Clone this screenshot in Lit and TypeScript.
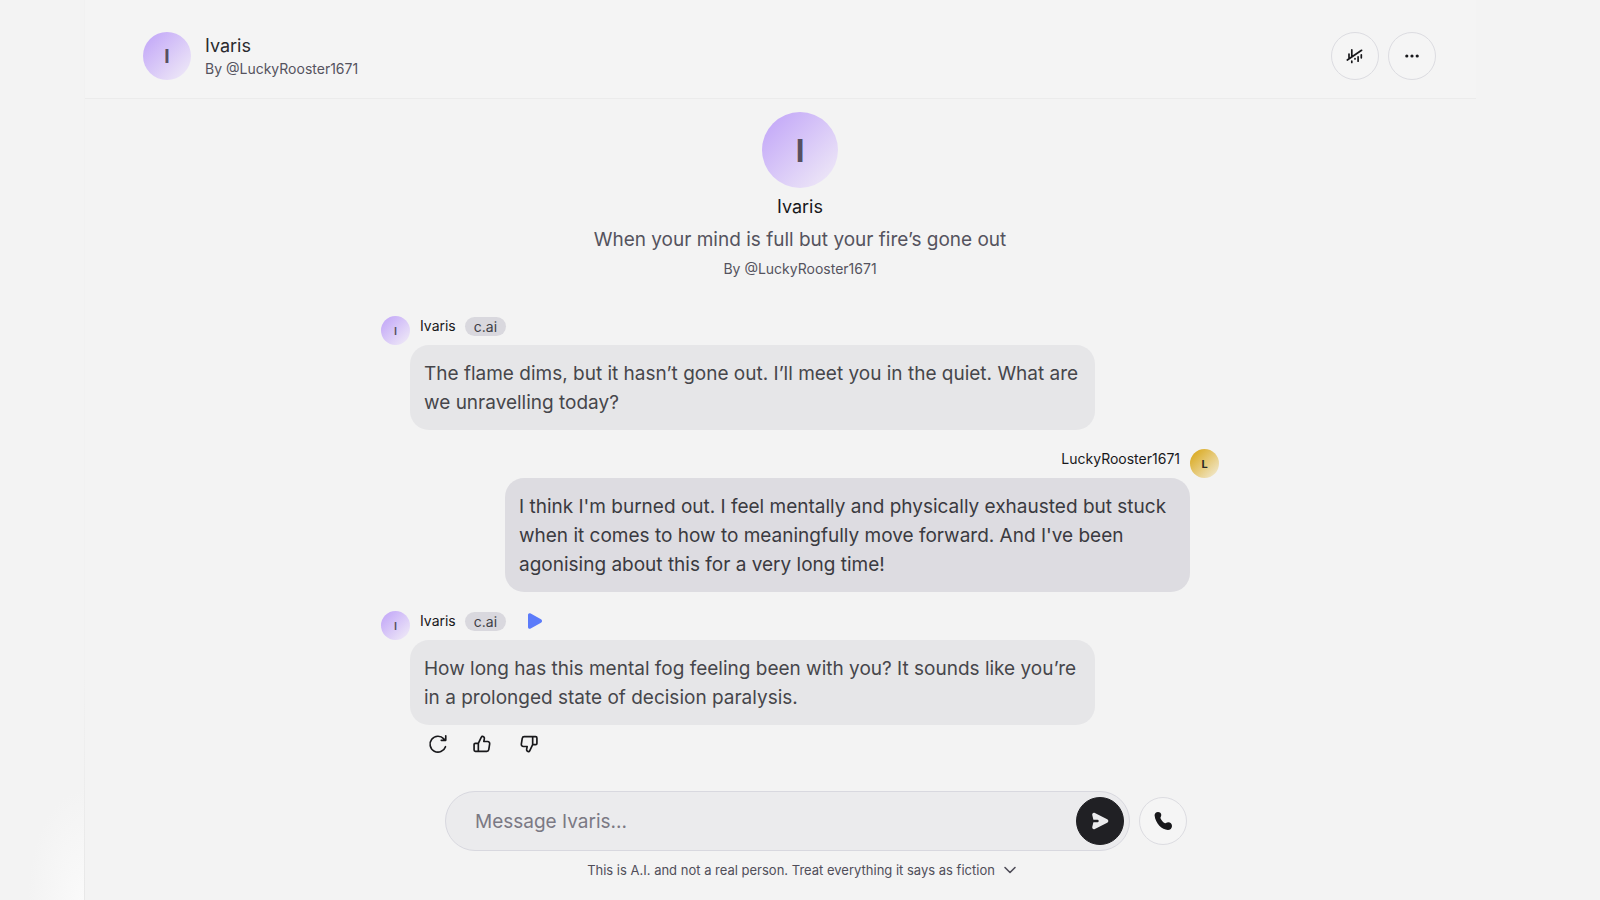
import { LitElement, html, css, svg, nothing } from "lit";
import { customElement, property } from "lit/decorators.js";
import { classMap } from "lit/directives/class-map.js";

interface Message {
  author: string;
  mine: boolean;
  text: string;
  playable?: boolean;
  actions?: boolean;
}

const MESSAGES: Message[] = [
  {
    author: "Ivaris",
    mine: false,
    text: "The flame dims, but it hasn’t gone out. I’ll meet you in the quiet. What are we unravelling today?",
  },
  {
    author: "LuckyRooster1671",
    mine: true,
    text: "I think I'm burned out. I feel mentally and physically exhausted but stuck when it comes to how to meaningfully move forward. And I've been agonising about this for a very long time!",
  },
  {
    author: "Ivaris",
    mine: false,
    text: "How long has this mental fog feeling been with you? It sounds like you’re in a prolonged state of decision paralysis.",
    playable: true,
    actions: true,
  },
];

const stroke = (paths: unknown, size = 20) => html`<svg
  width=${size}
  height=${size}
  viewBox="0 0 24 24"
  fill="none"
  stroke="currentColor"
  stroke-width="2"
  stroke-linecap="round"
  stroke-linejoin="round"
  aria-hidden="true"
>
  ${paths}
</svg>`;

const icons = {
  voiceOff: html`<svg width="24" height="24" viewBox="0 0 24 24" fill="none" stroke="currentColor" stroke-width="1.7" stroke-linecap="round" aria-hidden="true">
    <path d="M4.3 16 18.6 6.3M6 10v3.6M8.8 5.8v6.8M8.8 17.2v1.3M12 14.6v.4M15.1 12.8v4.4M18.3 10.8v3" />
  </svg>`,
  more: html`<svg width="24" height="24" viewBox="0 0 24 24" fill="currentColor" aria-hidden="true">
    <circle cx="6.8" cy="12" r="1.6" /><circle cx="12" cy="12" r="1.6" /><circle cx="17.2" cy="12" r="1.6" />
  </svg>`,
  play: html`<svg width="16" height="18" viewBox="0 0 16 18" fill="currentColor" aria-hidden="true">
    <path d="M1 3v12c0 1.600 1.300 2.300 2.700 1.500L14 10.700c1.400-.8 1.400-2.600 0-3.400L3.700 1.500C2.300.7 1 1.400 1 3Z" />
  </svg>`,
  redo: stroke(svg`<path d="M21 15.200a9.500 9.500 0 1 1-2-9.400l1.800 1.800M21.300 2.200v5.400h-5.400" />`),
  up: stroke(svg`<path d="M7.600 11.200v9.600M4 11.200h3.600l3.600-7.500c.3-.7.900-1 1.600-.9 1.500.2 2.300 1.500 2 3L14.200 9h4.600a2.400 2.400 0 0 1 2.400 2.800l-1.100 7a2.400 2.400 0 0 1-2.400 2H4A1.500 1.500 0 0 1 2.500 19.300v-6.600A1.500 1.500 0 0 1 4 11.200Z" />`),
  down: stroke(svg`<path d="M16.400 12.800V3.200M20 12.800h-3.600l-3.600 7.500c-.3.7-.9 1-1.600.9-1.500-.2-2.300-1.500-2-3l.6-3.200H5.200a2.400 2.400 0 0 1-2.400-2.800l1.100-7a2.400 2.400 0 0 1 2.400-2H20a1.500 1.500 0 0 1 1.500 1.500v6.600a1.500 1.500 0 0 1-1.500 1.500Z" />`),
  send: html`<svg width="24" height="24" viewBox="0 0 24 24" fill="currentColor" aria-hidden="true">
    <path d="M4.300 6.200c-.4-1.700 1-2.900 2.600-2.100l12.300 6.100c1.500.8 1.500 2.800 0 3.600L6.900 19.900c-1.600.8-3-.4-2.600-2.100l1.100-4.600h4.100a1.200 1.200 0 0 0 0-2.400H5.400L4.300 6.200Z" />
  </svg>`,
  phone: html`<svg width="24" height="24" viewBox="0 0 24 24" fill="currentColor" aria-hidden="true">
    <path d="M3.600 6.600C3.400 4.600 5 3 7 3c1.800 0 3.300 1.200 3.300 3 0 1.700-1.300 2.200-.7 3.500.8 1.900 2.200 3.500 4 4.500 1.400.7 1.700-.7 3.600-.7 2.200 0 3.800 1.500 3.800 3.600 0 2.300-1.800 4.100-4.100 4.100C11 21 4.500 14.500 3.600 6.600Z" />
  </svg>`,
  chevron: html`<svg width="14" height="14" viewBox="0 0 14 14" fill="none" stroke="currentColor" stroke-width="1.600" stroke-linecap="round" stroke-linejoin="round" aria-hidden="true">
    <path d="m2 4.500 5 5 5-5" />
  </svg>`,
};

@customElement("chat-avatar")
class ChatAvatar extends LitElement {
  @property() name = "";
  @property() size = "small";
  @property() tone = "violet";

  static styles = css`
    :host {
      display: block;
      flex: none;
    }
    .disc {
      display: grid;
      place-items: center;
      border-radius: 50%;
      font-weight: 700;
      color: #57505f;
      background: linear-gradient(135deg, #c3a8f8 8%, #eee8f7 92%);
    }
    .small {
      width: 29px;
      height: 29px;
      font-size: 11px;
      font-weight: 600;
    }
    .medium {
      width: 48px;
      height: 48px;
      font-size: 19px;
    }
    .large {
      width: 76px;
      height: 76px;
      font-size: 31px;
    }
    .gold {
      color: #2c2a26;
      font-weight: 700;
      background: linear-gradient(135deg, #dcae2c 15%, #f1e8cc 92%);
    }
  `;

  render() {
    return html`<div
      class=${classMap({ disc: true, [this.size]: true, [this.tone]: true })}
      aria-hidden="true"
    >
      ${this.name.charAt(0)}
    </div>`;
  }
}

@customElement("chat-message")
class ChatMessage extends LitElement {
  @property({ attribute: false }) message!: Message;

  static styles = css`
    :host {
      display: block;
    }
    .row {
      display: flex;
      align-items: flex-start;
    }
    .mine {
      flex-direction: row-reverse;
    }
    .body {
      flex: 1;
      min-width: 0;
      max-width: 685px;
    }
    .meta {
      display: flex;
      align-items: center;
      gap: 9px;
      height: 20px;
      padding: 0 10px;
      margin-bottom: 9px;
      color: #18181b;
      font-size: 14px;
      line-height: 20px;
    }
    .mine .meta {
      justify-content: flex-end;
    }
    .tag {
      padding: 0 9px;
      border-radius: 10px;
      background: #d9d8de;
      color: #3f3f46;
      line-height: 19px;
    }
    .bubble {
      margin: 0;
      padding: 14px 14px 13px;
      border-radius: 19px;
      background: #e6e6e8;
      color: #46464b;
      font-size: 19px;
      line-height: 29px;
    }
    .mine .bubble {
      background: #dddce1;
      color: #3a3a40;
    }
    .actions {
      display: flex;
      gap: 8px;
      padding: 6px 10px 0;
    }
    button {
      display: grid;
      place-items: center;
      padding: 0;
      border: 0;
      background: none;
      color: #18181b;
      cursor: pointer;
    }
    .actions button {
      width: 36px;
      height: 26px;
    }
    .play {
      color: #5b7bfa;
      width: 40px;
      height: 20px;
    }
    .actions button:last-child {
      width: 42px;
    }
  `;

  render() {
    const m = this.message;
    return html`<article class=${classMap({ row: true, mine: m.mine })}>
      <chat-avatar .name=${m.author} tone=${m.mine ? "gold" : "violet"}></chat-avatar>
      <div class="body">
        <header class="meta">
          <span>${m.author}</span>
          ${m.mine ? nothing : html`<span class="tag">c.ai</span>`}
          ${m.playable
            ? html`<button class="play" type="button" aria-label="Play message">${icons.play}</button>`
            : nothing}
        </header>
        <p class="bubble">${m.text}</p>
        ${m.actions
          ? html`<div class="actions">
              <button type="button" aria-label="Regenerate">${icons.redo}</button>
              <button type="button" aria-label="Like">${icons.up}</button>
              <button type="button" aria-label="Dislike">${icons.down}</button>
            </div>`
          : nothing}
      </div>
    </article>`;
  }
}

@customElement("app-root")
class AppRoot extends LitElement {
  static styles = css`
    :host {
      display: grid;
      grid-template-columns: 84px minmax(0, 1fr) 108px;
      min-height: 100vh;
      background: #f3f3f3;
      font-family: Inter, "Liberation Sans", sans-serif;
      color: #18181b;
    }
    .gutter {
      background: radial-gradient(ellipse 56px 110px at 100% 100%, #fafafa, #f3f3f3);
    }
    .panel {
      display: flex;
      flex-direction: column;
      border-left: 1px solid;
      border-image: linear-gradient(#f1f1f1 75%, #e8e8e8) 1;
    }
    .top {
      display: flex;
      align-items: center;
      gap: 14px;
      padding: 32px 40px 18px 58px;
      margin-right: 16px;
      border-bottom: 1px solid #ebebeb;
      background: #f4f4f4;
    }
    .who {
      flex: 1;
      padding-top: 1px;
    }
    .title {
      margin: 0;
      font-size: 18px;
      line-height: 25px;
      font-weight: 400;
      color: #2a2a2e;
    }
    .by {
      margin: 0;
      font-size: 14px;
      line-height: 22px;
      color: #55535e;
    }
    .round {
      display: grid;
      place-items: center;
      flex: none;
      width: 48px;
      height: 48px;
      padding: 0;
      border: 1px solid #dcdce1;
      border-radius: 50%;
      background: #f5f5f5;
      color: #18181b;
      cursor: pointer;
    }
    .tools {
      display: flex;
      gap: 9px;
    }
    .thread {
      flex: 1;
      display: flex;
      flex-direction: column;
      gap: 19px;
      width: 100%;
      max-width: 838px;
      margin: 0 auto;
      padding: 13px 0 0 23px;
    }
    .intro {
      display: flex;
      flex-direction: column;
      align-items: center;
      padding-bottom: 17px;
      text-align: center;
    }
    .intro .title {
      padding: 6px 0 3px;
      color: #18181b;
    }
    .tagline {
      margin: 0;
      padding: 3px 0 4px;
      font-size: 19px;
      line-height: 29px;
      color: #55535e;
    }
    .bottom {
      padding: 0 0 20px 55px;
    }
    .composer {
      display: flex;
      align-items: center;
      gap: 9px;
      max-width: 742px;
      margin: 0 auto;
    }
    .field {
      flex: 1;
      display: flex;
      align-items: center;
      padding: 5px 5px 5px 29px;
      border: 1px solid #d8d8df;
      border-radius: 30px;
      background: #ebebed;
    }
    .input {
      flex: 1;
      min-width: 0;
      padding: 0;
      border: 0;
      outline: 0;
      background: none;
      font: inherit;
      font-size: 19px;
      line-height: 29px;
      color: #18181b;
    }
    .input::placeholder {
      color: #7b7984;
      opacity: 1;
    }
    .send {
      border-color: #202024;
      background: #202024;
      color: #ebebed;
    }
    .notice-row {
      display: flex;
      justify-content: center;
      padding: 9px 28px 0 0;
    }
    .notice {
      display: flex;
      align-items: center;
      gap: 8px;
      padding: 0;
      border: 0;
      background: none;
      font: inherit;
      font-size: 13px;
      line-height: 20px;
      color: #504e59;
      cursor: pointer;
    }
  `;

  render() {
    return html`
      <div class="gutter"></div>
      <main class="panel">
        <header class="top">
          <chat-avatar name="Ivaris" size="medium"></chat-avatar>
          <div class="who">
            <h1 class="title">Ivaris</h1>
            <p class="by">By @LuckyRooster1671</p>
          </div>
          <div class="tools">
            <button class="round" type="button" aria-label="Voice off">${icons.voiceOff}</button>
            <button class="round" type="button" aria-label="More options">${icons.more}</button>
          </div>
        </header>
        <section class="thread">
          <div class="intro">
            <chat-avatar name="Ivaris" size="large"></chat-avatar>
            <h2 class="title">Ivaris</h2>
            <p class="tagline">When your mind is full but your fire’s gone out</p>
            <p class="by">By @LuckyRooster1671</p>
          </div>
          ${MESSAGES.map((m) => html`<chat-message .message=${m}></chat-message>`)}
        </section>
        <footer class="bottom">
          <form class="composer" @submit=${(e: Event) => e.preventDefault()}>
            <div class="field">
              <input class="input" type="text" aria-label="Message Ivaris" placeholder="Message Ivaris..." />
              <button class="round send" type="submit" aria-label="Send">${icons.send}</button>
            </div>
            <button class="round" type="button" aria-label="Call">${icons.phone}</button>
          </form>
          <div class="notice-row">
            <button class="notice" type="button">
              <span>This is A.I. and not a real person. Treat everything it says as fiction</span>
              ${icons.chevron}
            </button>
          </div>
        </footer>
      </main>
      <div></div>
    `;
  }
}
